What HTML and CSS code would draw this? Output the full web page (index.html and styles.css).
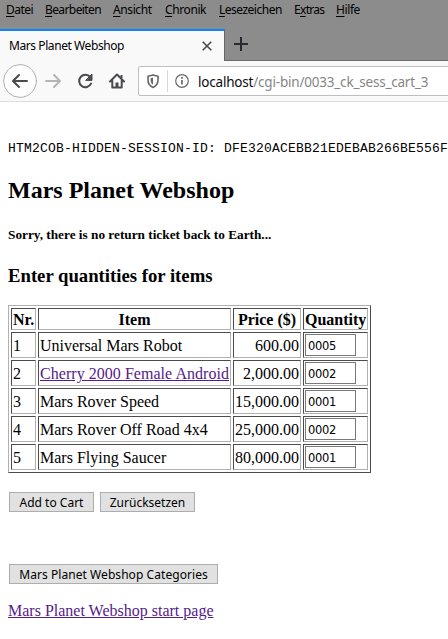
FILE: index.html
```html
<!DOCTYPE html>
<html lang="de">
<head>
<meta charset="utf-8">
<title>Mars Planet Webshop</title>
<link rel="stylesheet" href="styles.css">
</head>
<body>
<header class="browser">
  <nav class="menubar">
    <span class="m1"><u>D</u>atei</span><span class="m2"><u>B</u>earbeiten</span><span class="m3"><u>A</u>nsicht</span><span class="m4"><u>C</u>hronik</span><span class="m5"><u>L</u>esezeichen</span><span class="m6">E<u>x</u>tras</span><span class="m7"><u>H</u>ilfe</span>
  </nav>
  <div class="tabs">
    <div class="tab">
      <span class="tab-title">Mars Planet Webshop</span>
      <svg class="close" width="12" height="12" viewBox="0 0 12 12"><path d="M1.7 1.7l8.6 8.6M10.3 1.7l-8.6 8.6" stroke="#4a4a4f" stroke-width="1.6" fill="none"/></svg>
    </div>
    <svg class="plus" width="16" height="16" viewBox="0 0 16 16"><path d="M8 1v14M1 8h14" stroke="#2a2a2e" stroke-width="2" fill="none"/></svg>
  </div>
  <div class="toolbar">
    <svg width="138" height="40" viewBox="0 0 138 40" fill="none" stroke="#4a4a4f" stroke-width="2" stroke-linecap="round" stroke-linejoin="round">
      <circle cx="20" cy="20" r="16.4" fill="#fdfdfd" stroke="#b1b1b1" stroke-width="1"/>
      <path d="M27 20H13.5M19 14l-6 6 6 6"/>
      <path d="M46 20h13.5M54 14l6 6-6 6" stroke="#b4b4b6"/>
      <path d="M90.3 16.2A6.2 6.2 0 1 0 91 22.6"/>
      <path d="M92 13.4v6h-6z" fill="#4a4a4f" stroke-width="1"/>
      <path d="M110 20.5l7-7 7 7M112.3 19.5v7h9.4v-7"/>
      <path d="M121.5 14v3" stroke-linecap="butt"/>
      <path d="M117 26v-4.5" stroke-width="3" stroke-linecap="butt"/>
    </svg>
    <div class="urlbar">
      <svg width="52" height="28" viewBox="0 0 52 28" fill="none" stroke="#68686c">
        <path d="M14 7.9l5 1.3v4.1c0 3.5-2 5.8-5 7.2-3-1.4-5-3.7-5-7.2V9.2z" stroke-width="1.6" stroke-linejoin="round"/>
        <path d="M14 10.6v7.2c-1.5-1-2.4-2.5-2.4-4.8v-1.7z" fill="#68686c" stroke="none"/>
        <path d="M28.5 3v22" stroke="#d7d7db"/>
        <circle cx="43" cy="14" r="6.3" stroke-width="1.2"/>
        <path d="M43 13v4.5M43 10v1.7" stroke-width="1.7"/>
      </svg>
      <span class="url"><b>localhost</b>/cgi-bin/0033_ck_sess_cart_3</span>
    </div>
  </div>
</header>
<main class="page">
  <pre>HTM2COB-HIDDEN-SESSION-ID: DFE320ACEBB21EDEBAB266BE556F</pre>
  <h2>Mars Planet Webshop</h2>
  <h5>Sorry, there is no return ticket back to Earth...</h5>
  <h3>Enter quantities for items</h3>
  <form>
    <table>
      <colgroup><col class="c-nr"><col class="c-item"><col class="c-price"><col class="c-qty"></colgroup>
      <tr><th>Nr.</th><th>Item</th><th>Price ($)</th><th>Quantity</th></tr>
      <tr><td>1</td><td>Universal Mars Robot</td><td class="price">600.00</td><td><input value="0005"></td></tr>
      <tr><td>2</td><td><a href="#">Cherry 2000 Female Android</a></td><td class="price">2,000.00</td><td><input value="0002"></td></tr>
      <tr><td>3</td><td>Mars Rover Speed</td><td class="price">15,000.00</td><td><input value="0001"></td></tr>
      <tr><td>4</td><td>Mars Rover Off Road 4x4</td><td class="price">25,000.00</td><td><input value="0002"></td></tr>
      <tr><td>5</td><td>Mars Flying Saucer</td><td class="price">80,000.00</td><td><input value="0001"></td></tr>
    </table>
    <div class="actions"><button type="button" class="b-add">Add to Cart</button><button type="reset" class="b-reset">Zurücksetzen</button></div>
    <div class="categories"><button type="button" class="b-cat">Mars Planet Webshop Categories</button></div>
  </form>
  <a class="start" href="#">Mars Planet Webshop start page</a>
</main>
</body>
</html>
```
FILE: styles.css
```css
* { box-sizing: border-box; }
html { height: 639px; overflow: hidden; }
body { margin: 0; background: #fff; color: #000; overflow: hidden; font: 16px/18px "Liberation Serif", serif; }
svg { display: block; flex: none; }

.browser { background: #8c8c8c; font-family: "Noto Sans", sans-serif; }
.menubar { display: flex; gap: 12px; height: 29px; padding-left: 6px; font-size: 12px; line-height: 20px; white-space: nowrap; }
.menubar span { flex: none; letter-spacing: -0.4px; }
.menubar u { text-underline-offset: 2px; }
.menubar .m1 { width: 27px; letter-spacing: -0.5px; }
.menubar .m2 { width: 56px; letter-spacing: -0.6px; }
.m3 { width: 40px; }
.m4 { width: 42px; }
.menubar .m5 { width: 63px; letter-spacing: -0.5px; }
.menubar .m6 { width: 30px; letter-spacing: -0.7px; }
.m7 { width: 26px; }

.tabs { display: flex; height: 32px; border-bottom: 1px solid #6b6b6b; }
.tab { display: flex; align-items: center; justify-content: space-between; width: 225px; height: 32px; padding: 0 11px 0 9px; background: #f9f9fa; border-top: 2px solid #0a84ff; border-right: 1px solid #666; font-size: 12px; }
.tab-title { letter-spacing: -0.42px; }
.plus { margin: 7px 0 0 8px; }

.toolbar { display: flex; align-items: flex-start; height: 41px; background: #f9f9fa; border-bottom: 1px solid #ddd; overflow: hidden; }
.urlbar { display: flex; flex: 1; height: 30px; margin: 5px -4px 0 0; background: #fff; border: 1px solid #bebebe; border-radius: 2px; }
.url { margin-left: 7px; font-size: 13.5px; letter-spacing: -0.2px; line-height: 30px; color: #858585; white-space: nowrap; }
.url b { font-weight: 400; color: #0c0c0d; }

.page { padding: 39px 0 0 8px; }
pre { margin: 0; font: 13px/16px "Liberation Mono", monospace; letter-spacing: 0.2px; }
h2 { margin: 19px 0 0; font-size: 24px; line-height: 28px; }
h5 { margin: 23px 0 0; font-size: 13.28px; line-height: 16px; }
h3 { margin: 22px 0 0; font-size: 18.72px; line-height: 22px; }

table { width: 363px; margin-top: 18px; table-layout: fixed; border: 1px solid; border-color: #b0b0b0 #4c4c4c #4c4c4c #b0b0b0; border-spacing: 2px; }
.c-nr { width: 25px; }
.c-item { width: 193px; }
.c-price { width: 68px; }
.c-qty { width: 65px; }
th, td { height: 26px; padding: 2px 1px 0; border: 1px solid; border-color: #4c4c4c #b0b0b0 #b0b0b0 #4c4c4c; white-space: nowrap; }
td:last-child { padding: 1px; }
th { height: 22px; }
.price { text-align: right; }
a { color: #551a8b; }
td a { letter-spacing: 0.04px; }
input { display: block; width: 51px; height: 22px; padding: 1px 2px 0; border: 1px solid #7a7a7a; outline: 0; font: 11.5px/18px "DejaVu Sans", sans-serif; letter-spacing: -0.3px; color: #000; }
button { height: 20px; padding: 0; background: #e1e1e1; border: 1px solid #adadad; font: 12px/17px "Noto Sans", sans-serif; color: #000; white-space: nowrap; }
.actions { display: flex; gap: 6px; margin: 19px 0 0 1px; }
.b-add { width: 85px; }
.b-reset { width: 95px; }
.categories { display: flex; margin: 52px 0 0 1px; }
.b-cat { width: 209px; letter-spacing: 0.06px; }
.start { display: block; width: max-content; margin-top: 18px; }
```
